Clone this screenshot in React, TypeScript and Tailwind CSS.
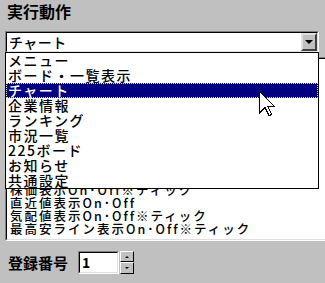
import React from "react";

const menuItems = [
  "メニュー",
  "ボード・一覧表示",
  "チャート",
  "企業情報",
  "ランキング",
  "市況一覧",
  "225ボード",
  "お知らせ",
  "共通設定",
];

const settingRows = [
  "株価表示On･Off※ティック",
  "直近値表示On･Off",
  "気配値表示On･Off※ティック",
  "最高安ライン表示On･Off※ティック",
];

function Cursor() {
  return (
    <svg
      className="absolute left-[259px] top-[91px]"
      width="16"
      height="26"
      viewBox="0 0 12 19.5"
      shapeRendering="crispEdges"
    >
      <path
        d="M0.5 0.5 L0.5 16.5 L4.5 12.5 L7.5 18.5 L9.5 17.5 L6.5 11.5 L11.5 11.5 Z"
        fill="#ffffff"
        stroke="#000000"
        strokeWidth="1"
      />
    </svg>
  );
}

export default function App() {
  const font = { fontFamily: '"Noto Sans CJK JP", "Liberation Sans", sans-serif' };
  return (
    <div
      className="relative w-[325px] h-[283px] overflow-hidden bg-[#c0c0c0] text-black flex flex-col pl-[5px]"
      style={font}
    >
      {/* 見出し */}
      <div className="h-[31px] pl-[2px] pt-[1px] text-[16px] leading-[20px] font-bold">
        実行動作
      </div>

      {/* コンボボックス */}
      <div className="w-[314px] h-[22px] border border-t-[#808080] border-l-[#808080] border-b-white border-r-white">
        <div className="h-full flex border border-t-black border-l-black border-b-[#dfdfdf] border-r-[#dfdfdf] bg-white">
          <div className="flex-1 pl-[2px] text-[14px] leading-[18px] tracking-[0.5px] font-medium">チャート</div>
          <div className="w-[16px] h-full bg-[#c0c0c0] border-2 border-t-[#dfdfdf] border-l-[#dfdfdf] border-b-[#404040] border-r-[#404040] flex items-center justify-center">
            <div className="w-0 h-0 border-l-[4px] border-r-[4px] border-t-[4px] border-l-transparent border-r-transparent border-t-black" />
          </div>
        </div>
      </div>

      {/* 背後の設定リスト */}
      <div className="mt-[4px] w-[330px] h-[184px] border border-t-[#808080] border-l-[#808080] border-b-white border-r-white">
        <div className="h-full border border-t-black border-l-black border-b-[#dfdfdf] border-r-[#dfdfdf] bg-white flex flex-col justify-end overflow-hidden pb-[4px]">
          {settingRows.map((row) => (
            <div key={row} className="h-[13px] shrink-0 pl-[3px] text-[12.5px] leading-[13px] tracking-[2px] font-medium whitespace-nowrap">
              {row}
            </div>
          ))}
        </div>
      </div>

      {/* 登録番号 */}
      <div className="mt-[10px] flex items-center h-[23px]">
        <span className="pl-[3px] w-[73px] text-[15px] font-bold leading-[18px]">登録番号</span>
        <div className="w-[41px] h-[23px] border border-t-[#808080] border-l-[#808080] border-b-white border-r-white">
          <div className="h-full border border-t-black border-l-black border-b-[#dfdfdf] border-r-[#dfdfdf] bg-white pl-[2px] text-[14px] leading-[19px] font-bold">
            1
          </div>
        </div>
        <div className="ml-[1px] w-[14px] h-[23px] flex flex-col">
          <div className="h-[11px] bg-[#c0c0c0] border border-t-white border-l-white border-b-black border-r-black flex items-center justify-center">
            <div className="w-0 h-0 border-l-[2px] border-r-[2px] border-b-[2px] border-l-transparent border-r-transparent border-b-black" />
          </div>
          <div className="h-[12px] bg-[#c0c0c0] border border-t-white border-l-white border-b-black border-r-black flex items-center justify-center">
            <div className="w-0 h-0 border-l-[2px] border-r-[2px] border-t-[2px] border-l-transparent border-r-transparent border-t-black" />
          </div>
        </div>
      </div>

      {/* ドロップダウン */}
      <div className="absolute left-[5px] top-[52px] w-[314px] h-[137px] border border-black bg-white flex flex-col">
        {menuItems.map((item) => {
          const selected = item === "チャート";
          return (
            <div
              key={item}
              className={
                selected
                  ? "h-[15px] pl-[2px] bg-[#000080] text-white outline-1 outline-dotted outline-[#ffff00] -outline-offset-1 text-[14px] leading-[15px] tracking-[1.5px] font-medium"
                  : "h-[15px] pl-[2px] text-[14px] leading-[15px] tracking-[1.5px] font-medium"
              }
            >
              {item}
            </div>
          );
        })}
      </div>

      <Cursor />
    </div>
  );
}
